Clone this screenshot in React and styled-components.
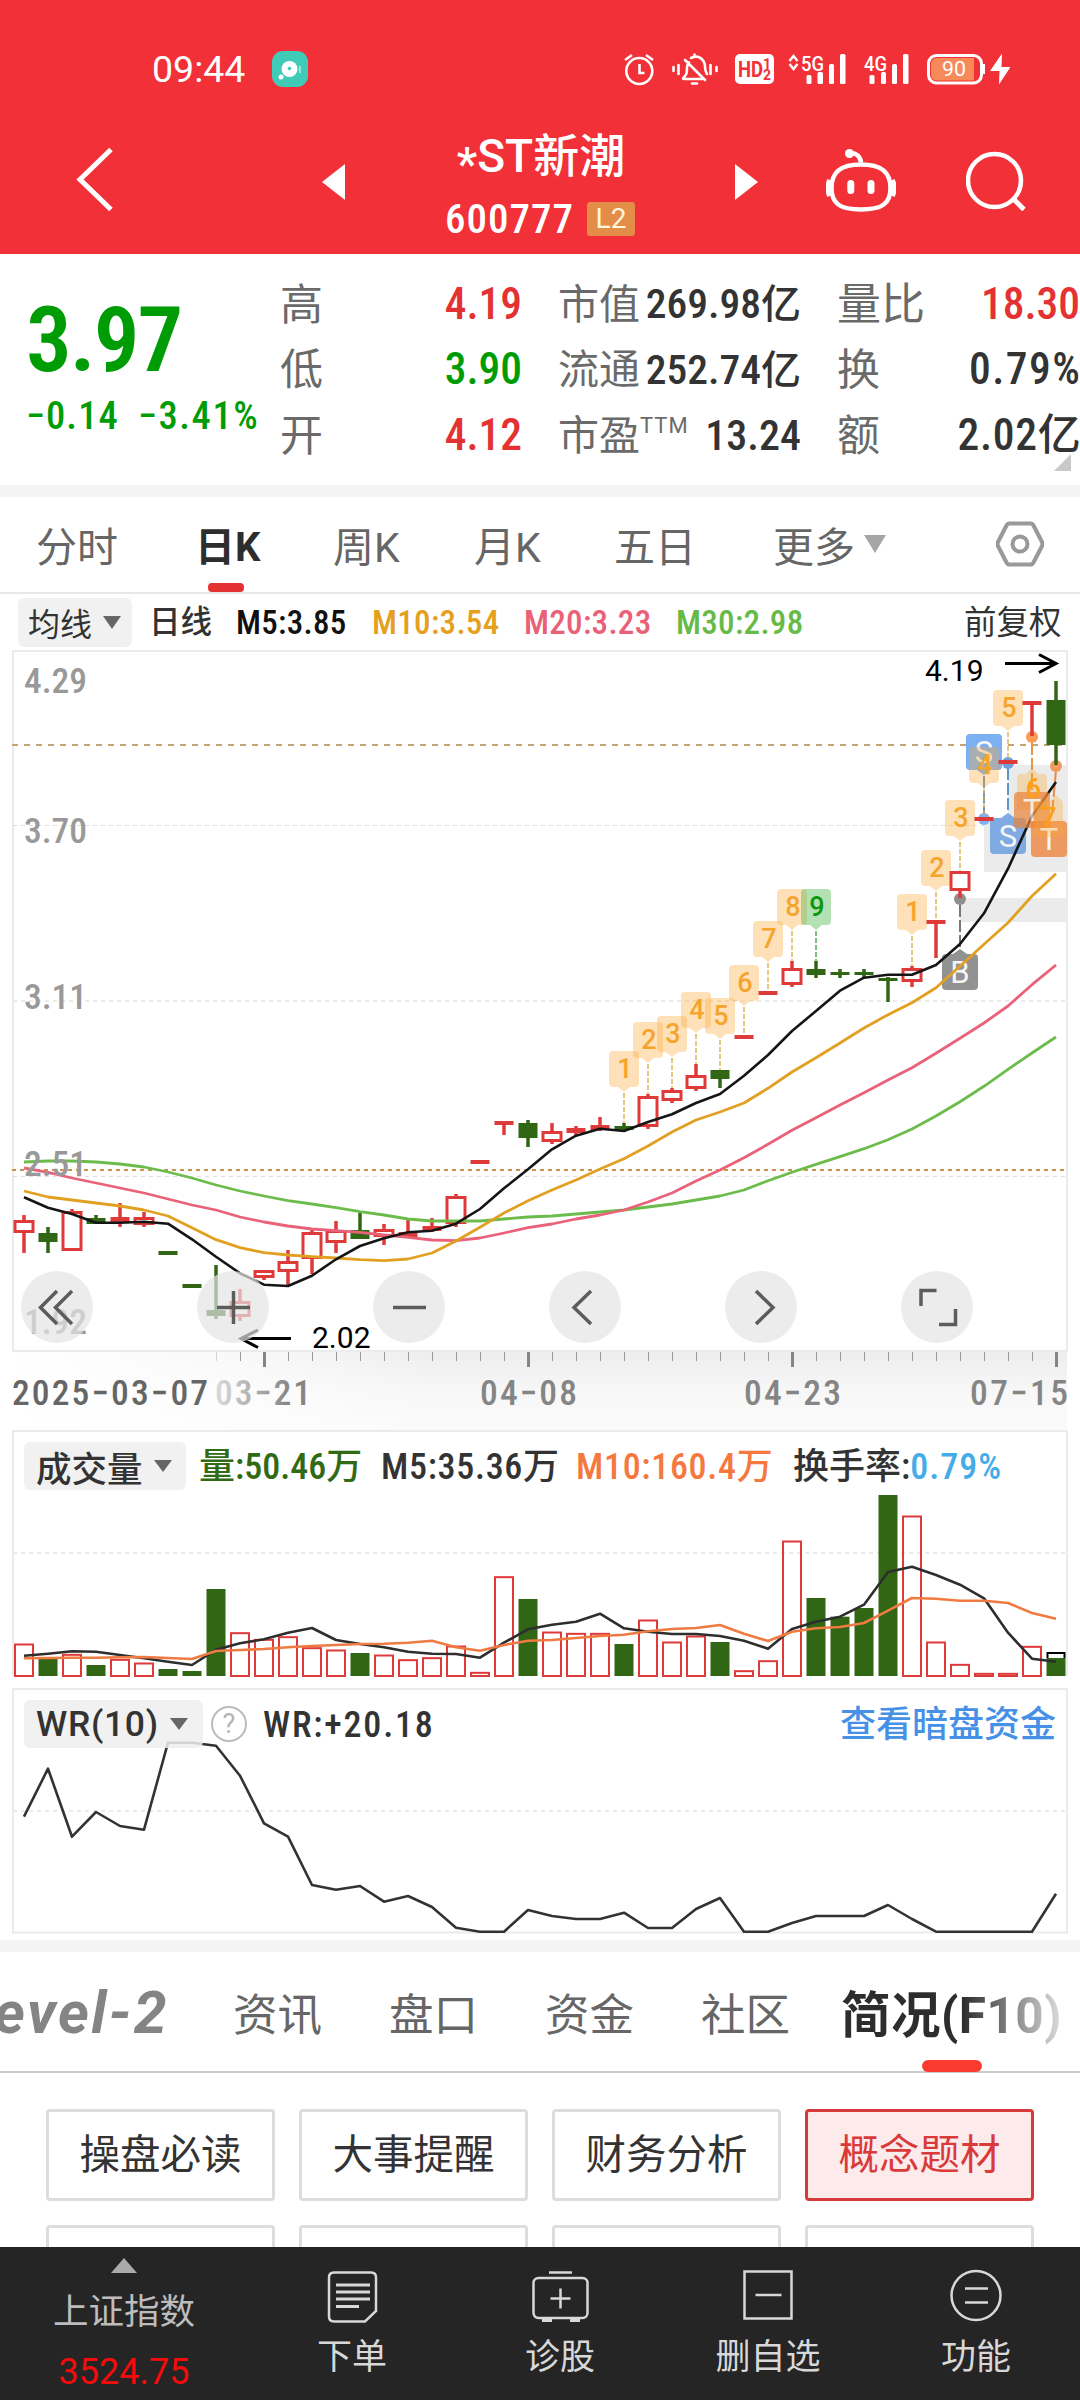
import React from "react";
import styled, { createGlobalStyle, css } from "styled-components";

const GlobalStyles = createGlobalStyle`
  *, *::before, *::after {
    box-sizing: border-box;
    margin: 0;
    padding: 0;
  }

  body {
    width: 1080px;
    background-color: #fff;
    font-family: Roboto, "Noto Sans CJK SC", sans-serif;
    color: #333;
    -webkit-font-smoothing: antialiased;
  }

  svg text {
    font-family: Roboto, "Noto Sans CJK SC", sans-serif;
  }
`;

const RED = "#e43232";
const CANDLE_RED = "#df3a3a";
const CANDLE_GREEN = "#306614";

/* ---------- data ---------- */

// kind, high, body top, body bottom, low (y on the canvas)
const candles = [
  ["r", 1215, 1220, 1233, 1253],
  ["g", 1227, 1233, 1242, 1253],
  ["r", 1209, 1211, 1251, 1251],
  ["g", 1215, 1218, 1224, 1224],
  ["r", 1203, 1217, 1222, 1227],
  ["r", 1212, 1217, 1225, 1227],
  ["g", 1251, 1251, 1255, 1255],
  ["g", 1284, 1284, 1288, 1288],
  ["g", 1265, 1310, 1316, 1319],
  ["r", 1289, 1301, 1317, 1321],
  ["r", 1270, 1270, 1278, 1280],
  ["r", 1250, 1261, 1272, 1286],
  ["r", 1230, 1232, 1259, 1274],
  ["r", 1221, 1230, 1243, 1253],
  ["g", 1213, 1230, 1239, 1239],
  ["r", 1224, 1229, 1237, 1245],
  ["r", 1219, 1232, 1237, 1237],
  ["r", 1218, 1226, 1231, 1231],
  ["r", 1194, 1196, 1224, 1227],
  ["r", 1160, 1160, 1164, 1164],
  ["r", 1121, 1121, 1125, 1135],
  ["g", 1120, 1123, 1138, 1147],
  ["r", 1123, 1131, 1142, 1144],
  ["r", 1126, 1128, 1133, 1135],
  ["r", 1117, 1125, 1130, 1131],
  ["g", 1123, 1126, 1130, 1131],
  ["r", 1094, 1096, 1127, 1129],
  ["r", 1088, 1090, 1101, 1103],
  ["r", 1064, 1075, 1089, 1091],
  ["g", 1070, 1070, 1079, 1088],
  ["r", 1035, 1035, 1039, 1039],
  ["r", 991, 991, 995, 995],
  ["r", 961, 968, 985, 987],
  ["g", 961, 969, 975, 978],
  ["g", 969, 972, 975, 978],
  ["g", 969, 972, 975, 978],
  ["g", 977, 978, 981, 1002],
  ["r", 966, 968, 982, 987],
  ["r", 920, 920, 924, 958],
  ["r", 871, 871, 891, 898],
  ["r", 817, 817, 821, 821],
  ["r", 760, 760, 764, 764],
  ["r", 701, 701, 705, 736],
  ["g", 681, 700, 745, 765],
];

// thirds of a pixel below 1020
const ma5 = [
  532, 563, 582, 608, 608, 605, 611, 658, 710, 760, 794, 798, 767, 718, 678,
  655, 637, 632, 611, 567, 505, 448, 388, 347, 326, 333, 306, 283, 249, 222,
  167, 105, 33, -27, -88, -127, -136, -136, -165, -228, -320, -454, -612, -714,
];
const ma10 = [
  513, 531, 540, 549, 558, 570, 588, 623, 659, 683, 698, 705, 710, 714, 719,
  722, 717, 699, 663, 622, 579, 542, 510, 480, 447, 416, 378, 336, 300, 276,
  249, 205, 156, 113, 69, 24, -16, -52, -97, -161, -227, -292, -372, -439,
];
const ma20 = [
  444, 457, 474, 489, 504, 519, 537, 555, 570, 591, 606, 618, 627, 632, 637,
  645, 652, 660, 662, 654, 639, 623, 612, 597, 585, 570, 546, 519, 483, 450,
  413, 373, 331, 293, 255, 218, 180, 143, 100, 55, 9, -42, -106, -165,
];
const ma30 = [
  426, 423, 423, 426, 432, 441, 456, 474, 495, 513, 528, 542, 552, 563, 575,
  585, 597, 603, 603, 603, 597, 591, 588, 582, 576, 570, 561, 552, 540, 528,
  510, 482, 457, 433, 410, 386, 359, 327, 288, 245, 199, 148, 99, 51,
];

// thirds of a pixel below 1420
const volumes = [
  ["r", 672], ["g", 712], ["r", 703], ["g", 735], ["r", 718], ["r", 729],
  ["g", 747], ["g", 753], ["g", 507], ["r", 638], ["r", 658], ["r", 650],
  ["r", 683], ["r", 690], ["g", 699], ["r", 705], ["r", 719], ["r", 713],
  ["r", 678], ["r", 757], ["r", 470], ["g", 537], ["r", 636], ["r", 640],
  ["r", 640], ["g", 672], ["r", 600], ["r", 666], ["r", 648], ["g", 666],
  ["r", 752], ["r", 722], ["r", 363], ["g", 534], ["g", 590], ["g", 564],
  ["g", 225], ["r", 288], ["r", 666], ["r", 733], ["r", 760], ["r", 760],
  ["r", 679], ["g", 714],
];
const volMa5 = [
  707, 701, 694, 695, 705, 715, 725, 735, 689, 670, 658, 638, 624, 660, 672,
  682, 695, 701, 702, 713, 668, 628, 614, 605, 581, 625, 635, 642, 642, 648,
  662, 686, 627, 605, 590, 554, 456, 440, 465, 494, 535, 638, 716, 725,
];
const volMa10 = [
  715, 714, 713, 713, 712, 711, 714, 717, 693, 690, 687, 682, 678, 675, 672,
  671, 668, 662, 682, 692, 675, 662, 660, 654, 648, 644, 634, 627, 624, 615,
  641, 663, 635, 625, 621, 609, 572, 534, 536, 542, 542, 549, 579, 596,
];
const wr = [
  1190, 1046, 1250, 1176, 1218, 1229, 968, 968, 977, 1067, 1210, 1250, 1395,
  1409, 1398, 1445, 1428, 1461, 1523, 1535, 1535, 1470, 1488, 1497, 1497, 1478,
  1524, 1524, 1467, 1434, 1535, 1535, 1509, 1488, 1488, 1488, 1455, 1497, 1535,
  1535, 1535, 1535, 1535, 1421,
];

// candle index, label, top of the tag, end of its leader line
const tags = [
  [25, "1", 1051, 1123],
  [26, "2", 1022, 1094],
  [27, "3", 1016, 1088],
  [28, "4", 992, 1064],
  [29, "5", 998, 1070],
  [30, "6", 965, 1035],
  [31, "7", 921, 991],
  [32, "8", 889, 961],
  [33, "9", 889, 961],
  [37, "1", 894, 966],
  [38, "2", 850, 920],
  [39, "3", 800, 871],
  [40, "4", 747, 817],
  [41, "5", 690, 760],
];

const xOf = (i) => 24 + i * 24;
const toPoints = (values, base) =>
  values.map((v, i) => `${xOf(i)},${(base + v / 3).toFixed(1)}`).join(" ");

/* ---------- shared ---------- */

const Page = styled.main`
  width: 1080px;
  height: 2400px;
  display: flex;
  flex-direction: column;
  overflow: hidden;
  background-color: #fff;
`;

const Divider = styled.div`
  height: 12px;
  flex-shrink: 0;
  background-color: #f4f4f4;
`;

const Num = styled.span`
  font-stretch: ${(p) => (p.$wide ? "normal" : "condensed")};
  letter-spacing: ${(p) => p.$ls ?? 0}px;
  white-space: nowrap;
`;

const Caret = styled.i`
  display: block;
  border-style: solid;
  border-color: transparent;
  border-width: ${(p) => p.$h}px ${(p) => p.$w / 2}px 0;
  border-top-color: ${(p) => p.$color};
`;

/* ---------- header ---------- */

const Header = styled.header`
  height: 254px;
  flex-shrink: 0;
  background-color: #f23037;
  color: #fff;
`;

const StatusBar = styled.div`
  height: 138px;
  padding: 0 70px 0 152px;
  display: flex;
  align-items: center;
  justify-content: space-between;
`;

const Clock = styled.div`
  display: flex;
  align-items: center;
  gap: 27px;
  font-size: 37.5px;
  line-height: 40px;
`;

const StatusIcons = styled.div`
  display: flex;
  align-items: center;
`;

const NavBar = styled.div`
  height: 116px;
  display: grid;
  grid-template-columns: 322px 23px 390px 23px 68px 70px 70px 59px;
`;

const NavIcon = styled.div`
  padding-top: ${(p) => p.$top}px;
  padding-left: ${(p) => p.$left ?? 0}px;

  svg {
    display: block;
  }
`;

const Title = styled.div`
  display: flex;
  flex-direction: column;
  align-items: center;
`;

const StockName = styled.h1`
  font-size: 46px;
  line-height: 50px;
  font-weight: 500;
  margin-top: -7px;
  padding-left: 2px;
`;

const Star = styled.span`
  position: relative;
  top: 8px;
`;

const StockCode = styled.div`
  display: flex;
  align-items: center;
  gap: 13px;
  font-size: 41px;
  line-height: 44px;
  font-weight: 500;
  margin-top: 16px;
`;

const LevelBadge = styled.span`
  width: 48px;
  height: 34px;
  border-radius: 3px;
  background-color: #e38d48;
  color: #fff6dc;
  font-size: 28px;
  line-height: 34px;
  font-weight: 400;
  text-align: center;
`;

function StatusIconRow() {
  return (
    <StatusIcons>
      <svg width="386" height="34" viewBox="624 52 386 34" fill="none">
        <g stroke="#fff" strokeWidth="2.6">
          <circle cx="639.3" cy="71" r="13" />
          <path d="M639.500 64v9h5" />
          <path d="M625 60l7-5M646 55l7 5" />
        </g>
        <g stroke="#fff" strokeWidth="2.6" strokeLinecap="round">
          <path d="M683 78.500c4-4 4-6 4-11 0-3 1-4 2-5M691 58c8-4 14 2 14 9 0 4 1 5 2 7M684 79h18M685 60l20 20" />
          <path d="M692 83.500h5M694.500 54.500v2M673.500 67v4M678.500 65v9M710.500 65v9M716.500 67v4" />
        </g>
        <rect x="735" y="54" width="39" height="30" rx="5" fill="#fff" />
        <text x="738" y="77" fontSize="22" fontWeight="700" fill="#f23037" textLength="25" lengthAdjust="spacingAndGlyphs">HD</text>
        <text x="763" y="69" fontSize="14" fontWeight="700" fill="#f23037">1</text>
        <text x="763" y="80" fontSize="14" fontWeight="700" fill="#f23037">2</text>
        <path d="M789.500 61l4-5 4 5M789.500 64l4 5 4-5" stroke="#fff" strokeWidth="2.400" />
        <text x="801" y="70.500" fontSize="21" fontWeight="500" fill="#fff" textLength="23" lengthAdjust="spacingAndGlyphs">5G</text>
        <g fill="#fff">
          <rect x="806.500" y="75" width="5" height="9" rx="1.500" />
          <rect x="817.500" y="72" width="5.500" height="12" rx="1.500" />
          <rect x="829" y="64" width="5" height="20" rx="1.500" />
          <rect x="840" y="54" width="5.500" height="30" rx="1.500" />
          <rect x="869.500" y="75" width="5" height="9" rx="1.500" />
          <rect x="881" y="72" width="5" height="12" rx="1.500" />
          <rect x="892" y="64" width="5" height="20" rx="1.500" />
          <rect x="903" y="54" width="5.500" height="30" rx="1.500" />
        </g>
        <text x="864" y="70.500" fontSize="21" fontWeight="500" fill="#fff" textLength="23" lengthAdjust="spacingAndGlyphs">4G</text>
        <rect x="928.500" y="55.500" width="53" height="27.500" rx="8" stroke="#fff" strokeWidth="3" />
        <path d="M936 58h38v22.500h-38q-5-1-5-6v-11q0-4 5-5.500z" fill="#f78a58" />
        <rect x="982.500" y="64" width="2.500" height="10" fill="#fff" />
        <text x="942" y="76" fontSize="20.500" fill="#fff" textLength="24" lengthAdjust="spacingAndGlyphs">90</text>
        <path d="M1002 53.500L990 71h9.500l-.5 13.500L1010.500 67h-9z" fill="#fff" />
      </svg>
    </StatusIcons>
  );
}

function AppHeader() {
  return (
    <Header>
      <StatusBar>
        <Clock>
          <Num $wide>09:44</Num>
          <svg width="36" height="36" viewBox="0 0 36 36">
            <rect width="36" height="36" rx="11" fill="#3fcbb8" />
            <circle cx="17.500" cy="18" r="8" fill="#fff" />
            <circle cx="17.500" cy="17.500" r="1.800" fill="#3fcbb8" />
            <circle cx="9" cy="26" r="2.500" fill="#fff" />
            <rect x="27" y="15" width="1.800" height="7" fill="#a5e8df" />
          </svg>
        </Clock>
        <StatusIconRow />
      </StatusBar>
      <NavBar>
        <NavIcon $top={8} $left={74}>
          <svg width="42" height="68" viewBox="0 0 42 68" fill="none">
            <path d="M37 3.500L6 33.500 37 63.500" stroke="#fff" strokeWidth="5" />
          </svg>
        </NavIcon>
        <NavIcon $top={26}>
          <svg width="23" height="36" viewBox="0 0 23 36">
            <path d="M23 0v36L0 18z" fill="#fff" />
          </svg>
        </NavIcon>
        <Title>
          <StockName>
            <Star>*</Star>ST新潮
          </StockName>
          <StockCode>
            <Num $ls={1}>600777</Num>
            <LevelBadge>L2</LevelBadge>
          </StockCode>
        </Title>
        <NavIcon $top={26}>
          <svg width="23" height="36" viewBox="0 0 23 36">
            <path d="M0 0v36l23-18z" fill="#fff" />
          </svg>
        </NavIcon>
        <div />
        <NavIcon $top={10}>
          <svg width="70" height="66" viewBox="826 148 70 66" fill="none" stroke="#fff">
            <path d="M831.500 188c0-17 10-23.500 29.500-23.500s29.500 6.500 29.500 23.500c0 16-9 21.500-29.500 21.500s-29.500-5.500-29.500-21.500z" strokeWidth="4.500" />
            <path d="M849 153.500c7-1 11.500 2.500 12 9" strokeWidth="4.500" />
            <circle cx="849.500" cy="153.500" r="4.500" fill="#fff" stroke="none" />
            <path d="M829.500 180q-4 8 0 16M892.500 180q4 8 0 16" strokeWidth="4.500" />
            <path d="M850.800 183.500v7M871 183.500v7" strokeWidth="7" strokeLinecap="round" />
          </svg>
        </NavIcon>
        <div />
        <NavIcon $top={13}>
          <svg width="60" height="60" viewBox="966 151 60 60" fill="none" stroke="#fff">
            <circle cx="994.500" cy="180.500" r="26.500" strokeWidth="4.500" />
            <path d="M1013 198.500l11 11" strokeWidth="5" />
          </svg>
        </NavIcon>
      </NavBar>
    </Header>
  );
}

/* ---------- quote ---------- */

const Quote = styled.section`
  position: relative;
  height: 231px;
  flex-shrink: 0;
  display: grid;
  grid-template-columns: 280px 242px 36px 243px 36px 243px;
`;

const PriceBlock = styled.div`
  padding: 41px 0 0 26px;
  color: #009c05;
`;

const Price = styled.div`
  font-size: 91px;
  line-height: 90px;
  font-weight: 600;
`;

const Change = styled.div`
  display: flex;
  gap: 19px;
  margin-top: 9px;
  font-size: 38.5px;
  line-height: 44px;
  font-weight: 500;
`;

const Metrics = styled.dl`
  padding-top: 18px;
`;

const Metric = styled.div`
  height: 65.5px;
  display: flex;
  align-items: center;
  justify-content: space-between;
`;

const MetricLabel = styled.dt`
  color: #6a6a6a;
  font-size: ${(p) => p.$size ?? 43}px;
  line-height: 60px;
  white-space: nowrap;

  sup {
    display: inline-block;
    font-size: 22px;
    line-height: 20px;
    vertical-align: 17px;
    letter-spacing: 1px;
  }
`;

const tones = { up: RED, down: "#009c05", flat: "#333" };

const MetricValue = styled.dd`
  color: ${(p) => tones[p.$tone]};
  font-size: ${(p) => p.$size ?? 43.5}px;
  line-height: 60px;
  font-weight: 500;
  white-space: nowrap;
  font-stretch: condensed;
  letter-spacing: ${(p) => p.$ls ?? 0}px;
  margin-right: ${(p) => -(p.$ls ?? 0)}px;

  em {
    font-style: normal;
    font-size: ${(p) => p.$unit ?? 40}px;
    letter-spacing: 0;
  }
`;

const Corner = styled.i`
  position: absolute;
  right: 9px;
  bottom: 14px;
  border-style: solid;
  border-width: 0 0 17px 17px;
  border-color: transparent transparent #c8c8c8;
`;

function QuotePanel() {
  return (
    <Quote>
      <PriceBlock>
        <Price>
          <Num $ls={-2}>3.97</Num>
        </Price>
        <Change>
          <Num $ls={1.1}>−0.14</Num>
          <Num $ls={1.6}>−3.41%</Num>
        </Change>
      </PriceBlock>
      <Metrics>
        <Metric>
          <MetricLabel>高</MetricLabel>
          <MetricValue $tone="up">4.19</MetricValue>
        </Metric>
        <Metric>
          <MetricLabel>低</MetricLabel>
          <MetricValue $tone="down">3.90</MetricValue>
        </Metric>
        <Metric>
          <MetricLabel>开</MetricLabel>
          <MetricValue $tone="up">4.12</MetricValue>
        </Metric>
      </Metrics>
      <div />
      <Metrics>
        <Metric>
          <MetricLabel $size={41}>市值</MetricLabel>
          <MetricValue $tone="flat" $size={41.5}>
            269.98<em>亿</em>
          </MetricValue>
        </Metric>
        <Metric>
          <MetricLabel $size={41}>流通</MetricLabel>
          <MetricValue $tone="flat" $size={41.5}>
            252.74<em>亿</em>
          </MetricValue>
        </Metric>
        <Metric>
          <MetricLabel $size={41}>
            市盈<sup>TTM</sup>
          </MetricLabel>
          <MetricValue $tone="flat" $size={42}>13.24</MetricValue>
        </Metric>
      </Metrics>
      <div />
      <Metrics>
        <Metric>
          <MetricLabel $size={44}>量比</MetricLabel>
          <MetricValue $tone="up">18.30</MetricValue>
        </Metric>
        <Metric>
          <MetricLabel>换</MetricLabel>
          <MetricValue $tone="flat" $ls={1.5}>0.79%</MetricValue>
        </Metric>
        <Metric>
          <MetricLabel>额</MetricLabel>
          <MetricValue $tone="flat" $unit={43} $ls={0.7}>
            2.02<em>亿</em>
          </MetricValue>
        </Metric>
      </Metrics>
      <Corner />
    </Quote>
  );
}

/* ---------- period tabs ---------- */

const PeriodTabs = styled.nav`
  height: 97px;
  flex-shrink: 0;
  display: grid;
  grid-template-columns: 36px 159px 138px 141px 140px 159px 223px 84px;
  border-bottom: 2px solid #e8e8e8;
`;

const PeriodTab = styled.a`
  position: relative;
  display: flex;
  align-items: center;
  gap: 9px;
  padding-bottom: 2px;
  font-size: 41px;
  color: #666;

  ${(p) =>
    p.$active &&
    css`
      color: #2d2d2d;
      font-weight: 700;
      font-size: 40px;

      &::after {
        content: "";
        position: absolute;
        left: 13px;
        bottom: 0;
        width: 36px;
        height: 9px;
        border-radius: 4px;
        background-color: ${RED};
      }
    `}
`;

const IndicatorBar = styled.div`
  height: 56px;
  flex-shrink: 0;
  display: grid;
  grid-template-columns: 131px 87px 136px 152px 152px 288px 116px;
  padding-left: 18px;
  align-items: center;
  font-size: 33px;
  line-height: 40px;
`;

const PickerButton = styled.button`
  width: ${(p) => p.$w}px;
  height: ${(p) => p.$h ?? 48}px;
  padding-left: ${(p) => p.$pad ?? 12}px;
  flex-shrink: 0;
  display: flex;
  align-items: center;
  gap: 11px;
  border: none;
  border-radius: 6px;
  background-color: rgba(238, 238, 238, 0.85);
  font-family: inherit;
  font-size: ${(p) => p.$size ?? 35.5}px;
  font-weight: ${(p) => p.$weight ?? 500};
  color: #333;
`;

const Legend = styled.span`
  padding-top: 2px;
  color: ${(p) => p.$color};
  font-weight: 500;
  font-stretch: condensed;
  white-space: nowrap;
  letter-spacing: ${(p) => p.$ls ?? 0}px;
`;

const LegendTitle = styled(Legend)`
  font-size: 31.5px;
`;

const Adjust = styled.span`
  padding-top: 2px;
  font-size: 32.5px;
`;

function Periods() {
  return (
    <>
      <PeriodTabs>
        <div />
        <PeriodTab>分时</PeriodTab>
        <PeriodTab $active>日K</PeriodTab>
        <PeriodTab>周K</PeriodTab>
        <PeriodTab>月K</PeriodTab>
        <PeriodTab>五日</PeriodTab>
        <PeriodTab>
          更多
          <Caret $w={22} $h={18} $color="#a6a6a6" />
        </PeriodTab>
        <PeriodTab>
          <svg width="48" height="46" viewBox="0 0 48 46" fill="none" stroke="#999" strokeWidth="4">
            <path d="M13.500 2.500h21q2 0 3 2L46 21q1 2 0 4L37.500 41.500q-1 2-3 2h-21q-2 0-3-2L2 25q-1-2 0-4L10.500 4.500q1-2 3-2z" />
            <circle cx="24" cy="23" r="7.500" />
          </svg>
        </PeriodTab>
      </PeriodTabs>
      <IndicatorBar>
        <PickerButton $w={114} $h={49} $pad={10} $size={32} $weight={400}>
          均线
          <Caret $w={18} $h={13} $color="#666" />
        </PickerButton>
        <LegendTitle $color="#333">日线</LegendTitle>
        <Legend $color="#111" $ls={0.3}>M5:3.85</Legend>
        <Legend $color="#e5a020" $ls={0.3}>M10:3.54</Legend>
        <Legend $color="#ea6077" $ls={0.3}>M20:3.23</Legend>
        <Legend $color="#66bb48" $ls={0.3}>M30:2.98</Legend>
        <Adjust>前复权</Adjust>
      </IndicatorBar>
    </>
  );
}

/* ---------- candlestick chart ---------- */

const ChartWrap = styled.section`
  position: relative;
  height: 780px;
  flex-shrink: 0;

  > svg {
    display: block;
  }
`;

const AxisText = styled.g`
  font-size: 35.5px;
  font-weight: 500;
  font-stretch: condensed;
`;

const ChartControls = styled.div`
  position: absolute;
  left: 21px;
  top: 621px;
  display: flex;
  gap: 104px;
`;

const RoundButton = styled.button`
  width: 72px;
  height: 72px;
  border: none;
  border-radius: 50%;
  background-color: rgba(228, 228, 228, 0.7);

  svg {
    display: block;
  }
`;

function Candle({ index, kind, high, top, bottom, low }) {
  const x = xOf(index);
  const color = kind === "r" ? CANDLE_RED : CANDLE_GREEN;
  const hollow = kind === "r" && bottom - top > 6;

  return (
    <g>
      {high < top && <path d={`M${x} ${high}V${top}`} stroke={color} strokeWidth="3.500" />}
      {low > bottom && <path d={`M${x} ${bottom}V${low}`} stroke={color} strokeWidth="3.500" />}
      {hollow ? (
        <rect x={x - 9} y={top + 1.5} width="18" height={bottom - top - 3} fill="#fff" stroke={color} strokeWidth="3" />
      ) : (
        <rect x={x - 9.5} y={top} width="19" height={bottom - top} fill={color} />
      )}
    </g>
  );
}

function CountTag({ index, label, top, end }) {
  const x = xOf(index);
  const green = label === "9";
  const color = green ? "#0d970d" : "#f5a42c";

  return (
    <g>
      <path d={`M${x} ${top + 42}V${end}`} stroke={green ? "#3a9a3a" : "#d9ac3c"} strokeWidth="1.300" strokeDasharray="5 2" />
      <path
        d={`M${x - 11} ${top}h22q4 0 4 4v28q0 4-4 4h-5l-6 5-6-5h-5q-4 0-4-4v-28q0-4 4-4z`}
        fill={green ? "#4fb94f" : "#fba832"}
        fillOpacity={green ? 0.43 : 0.34}
      />
      <text x={x + 1} y={top + 27} fontSize="27" fontWeight="500" fill={color} textAnchor="middle">
        {label}
      </text>
    </g>
  );
}

function TradeTag({ x, top, label, color, opacity = 1, pointer }) {
  return (
    <g opacity={opacity}>
      <rect x={x - 18} y={top} width="36" height="36" rx="4" fill={color} />
      {pointer === "up" && <path d={`M${x - 7} ${top}l7-5 7 5z`} fill={color} />}
      {pointer === "down" && <path d={`M${x - 7} ${top + 36}l7 5 7-5z`} fill={color} />}
      <text x={x} y={top + 29} fontSize="31" fill="#f6f6f6" textAnchor="middle">
        {label}
      </text>
    </g>
  );
}

function KlineChart() {
  const ticks = Array.from({ length: 36 }, (_, i) => 216 + i * 24);

  return (
    <ChartWrap>
      <svg width="1080" height="780" viewBox="0 650 1080 780" fill="none">
        <defs>
          <linearGradient id="axisShade" x1="0" y1="0" x2="0" y2="1">
            <stop offset="0" stopColor="#ededed" />
            <stop offset="0.500" stopColor="#f7f7f7" />
            <stop offset="1" stopColor="#fbfbfb" />
          </linearGradient>
          <linearGradient id="axisFade" x1="0" y1="0" x2="1" y2="0">
            <stop offset="0" stopColor="#fff" />
            <stop offset="0.550" stopColor="#fff" stopOpacity="0.600" />
            <stop offset="1" stopColor="#fff" stopOpacity="0" />
          </linearGradient>
          <linearGradient id="dateFade" gradientUnits="userSpaceOnUse" x1="214" y1="0" x2="290" y2="0">
            <stop offset="0" stopColor="#dcdcdc" />
            <stop offset="1" stopColor="#858585" />
          </linearGradient>
        </defs>

        <rect x="13" y="1351" width="1054" height="79" fill="url(#axisShade)" />
        <rect x="13" y="1351" width="420" height="79" fill="url(#axisFade)" />
        <rect x="13" y="651" width="1054" height="700" stroke="#ebebeb" strokeWidth="2" />

        <g strokeDasharray="4 4">
          <path d="M13 825.500H1067" stroke="#dedede" strokeWidth="1" />
          <path d="M13 1001H1067" stroke="#ebebeb" strokeWidth="2" />
          <path d="M13 1176.500H1067" stroke="#dedede" strokeWidth="1" />
          <path d="M12 1170H1067" stroke="#c9914c" strokeWidth="2" />
        </g>
        <path d="M12 745H1067" stroke="#c4a473" strokeWidth="2" strokeDasharray="6 6" />

        <g fill="#ebebeb">
          <path d="M1008 765H1067V872H984V819H1008z" />
          <rect x="960" y="898" width="107" height="24" />
        </g>

        {/* buy, sell and T markers */}
        <g strokeWidth="2" strokeDasharray="12 3">
          <path d="M984 776V815" stroke="#5d95c8" />
          <path d="M1008 768V813" stroke="#5d95c8" />
          <path d="M960 905V950" stroke="#777" />
          <path d="M1032 743V790" stroke="#e29547" />
          <path d="M1056 770L1052 815" stroke="#ea8a45" />
        </g>
        <circle cx="984" cy="819" r="6" fill="#83b0f0" />
        <circle cx="1008" cy="763" r="6" fill="#6f9fd8" />
        <circle cx="960" cy="899" r="6" fill="#8f8f8f" />
        <circle cx="1032" cy="737" r="6" fill="#fa9c55" />
        <circle cx="1056" cy="766" r="6" fill="#f09a60" />
        <TradeTag x={984} top={734} label="S" color="#7bb0f3" pointer="down" />
        <TradeTag x={1008} top={818} label="S" color="#80abe2" pointer="up" />
        <TradeTag x={1049} top={821} label="T" color="#ec9a62" />
        <TradeTag x={960} top={954} label="B" color="#929292" pointer="up" />

        {tags.map(([index, label, top, end]) => (
          <CountTag key={index} index={index} label={label} top={top} end={end} />
        ))}
        {candles.map(([kind, high, top, bottom, low], i) => (
          <Candle key={i} index={i} kind={kind} high={high} top={top} bottom={bottom} low={low} />
        ))}

        <g strokeWidth="2.800" strokeLinejoin="round">
          <polyline points={toPoints(ma30, 1020)} stroke="#6cbc4c" />
          <polyline points={toPoints(ma20, 1020)} stroke="#e9627a" />
          <polyline points={toPoints(ma10, 1020)} stroke="#e2a022" />
          <polyline points={toPoints(ma5, 1020)} stroke="#151515" strokeWidth="2.600" />
        </g>

        <path d="M1021 774h5l6-6 6 6h5q4 0 4 4v28q0 4-4 4h-22q-4 0-4-4v-28q0-4 4-4z" fill="#fba832" fillOpacity="0.320" />
        <TradeTag x={1032} top={792} label="T" color="#ea8338" opacity={0.7} />
        <path d="M1038 801h12l6-6 6 6q1 1 1 4v28q0 4-4 4h-21q-4 0-4-4v-28q0-4 4-4z" fill="#fba832" fillOpacity="0.320" />
        <g fontSize="27" fontWeight="500" fill="#ff9f14" textAnchor="middle">
          <text x="1033.500" y="798">6</text>
          <text x="1049" y="827">7</text>
        </g>

        {/* price scale and range extremes */}
        <AxisText fill="#999">
          {[["4.29", 693], ["3.70", 843], ["3.11", 1009], ["2.51", 1176], ["1.92", 1334]].map(([label, y]) => (
            <text key={label} x="24" y={y} textLength="63">
              {label}
            </text>
          ))}
        </AxisText>
        <g stroke="#000" strokeWidth="3">
          <path d="M1005 663.500H1055M1039 654.500L1056 663.500 1039 672.500" />
          <path d="M291 1338.500H242M258 1330L241 1338.500 258 1347.500" />
        </g>
        <g fontSize="30" fill="#000">
          <text x="925" y="681">4.19</text>
          <text x="312" y="1347.500">2.02</text>
        </g>

        {ticks.map((x) => {
          const major = (x - 264) % 264 === 0;
          return (
            <path
              key={x}
              d={`M${x + 0.5} 1352v${major ? 15 : 9}`}
              stroke={x === 216 ? "#d5d5d5" : major ? "#858585" : "#9a9a9a"}
              strokeWidth={major ? 3 : 1}
            />
          );
        })}
        <AxisText fill="#858585">
          <text x="12" y="1405" fill="#666" textLength="196">2025−03−07</text>
          <text x="215" y="1405" fill="url(#dateFade)" textLength="96">03−21</text>
          <text x="480" y="1405" textLength="97">04−08</text>
          <text x="744" y="1405" textLength="97">04−23</text>
          <text x="970" y="1405" textLength="98">07−15</text>
        </AxisText>
      </svg>

      <ChartControls>
        {[
          "M36 20L19.500 36.500 36 53M51 20L34.500 36.500 51 53",
          "M20 36.500H53M36.500 20V53",
          "M20 36.500H53",
          "M42 20L25 36.500 42 53",
          "M31 20L48 36.500 31 53",
          "M35.500 19.500H20V35M54.500 38V53.500H38",
        ].map((d) => (
          <RoundButton key={d}>
            <svg width="72" height="72" viewBox="0 0 72 72" fill="none">
              <path d={d} stroke="#5c5c5c" strokeWidth="3.500" />
            </svg>
          </RoundButton>
        ))}
      </ChartControls>
    </ChartWrap>
  );
}

/* ---------- sub charts ---------- */

const SubChart = styled.section`
  position: relative;
  height: ${(p) => p.$h}px;
  flex-shrink: 0;

  > svg {
    position: absolute;
    inset: 0;
  }
`;

const SubHeader = styled.div`
  position: relative;
  display: grid;
  grid-template-columns: ${(p) => p.$cols};
  align-items: center;
  padding: 12px 0 0 24px;
  font-size: 36px;
  line-height: 46px;
`;

const HelpIcon = styled.span`
  width: 36px;
  height: 36px;
  border: 2.5px solid #bcbcbc;
  border-radius: 50%;
  color: #b4b4b4;
  font-size: 27px;
  line-height: 32px;
  text-align: center;
`;

const DarkPoolLink = styled.a`
  padding-top: 2px;
  color: #4690e6;
  font-size: 36px;
  font-weight: 500;
`;

function VolumeChart() {
  return (
    <SubChart $h={258}>
      <svg width="1080" height="258" viewBox="0 1430 1080 258" fill="none">
        <path d="M13 1676V1431H1067V1676" stroke="#ebebeb" strokeWidth="2" />
        <path d="M13 1553H1067" stroke="#ebebeb" strokeWidth="2" strokeDasharray="4 4" />
        {volumes.map(([kind, v], i) => {
          const top = 1420 + v / 3;
          const x = xOf(i);
          return kind === "g" ? (
            <rect key={i} x={x - 9.5} y={top} width="19" height={1676 - top} fill={CANDLE_GREEN} />
          ) : (
            <rect key={i} x={x - 9} y={top + 0.5} width="18" height={Math.max(1675.5 - top, 1)} stroke={CANDLE_RED} strokeWidth="2" />
          );
        })}
        <path d="M1047.500 1658V1653H1064.500V1658" stroke="#000" strokeWidth="2" />
        <g strokeWidth="2.600" strokeLinejoin="round">
          <polyline points={toPoints(volMa5, 1420)} stroke="#2e2e2e" />
          <polyline points={toPoints(volMa10, 1420)} stroke="#ef7a42" />
        </g>
      </svg>
      <SubHeader $cols="175px 182px 195px 217px auto 1fr">
        <PickerButton $w={162}>
          成交量
          <Caret $w={18} $h={12} $color="#666" />
        </PickerButton>
        <Legend $color="#326a14">量:50.46万</Legend>
        <Legend $color="#333" $ls={0.7}>M5:35.36万</Legend>
        <Legend $color="#f5793f" $ls={0.7}>M10:160.4万</Legend>
        <Legend $color="#333">换手率:</Legend>
        <Legend $color="#45ace8" $ls={1}>0.79%</Legend>
      </SubHeader>
    </SubChart>
  );
}

function WrChart() {
  return (
    <SubChart $h={252}>
      <svg width="1080" height="252" viewBox="0 1688 1080 252" fill="none">
        <rect x="13" y="1689" width="1054" height="243.500" stroke="#ebebeb" strokeWidth="2" />
        <path d="M13 1811H1067" stroke="#ebebeb" strokeWidth="2" strokeDasharray="4 4" />
        <polyline points={toPoints(wr, 1420)} stroke="#333" strokeWidth="2.600" strokeLinejoin="round" />
      </svg>
      <SubHeader $cols="187px 52px 577px auto">
        <PickerButton $w={179}>
          <Num $wide $ls={0.7}>WR(10)</Num>
          <Caret $w={18} $h={12} $color="#666" />
        </PickerButton>
        <HelpIcon>?</HelpIcon>
        <Legend $color="#333" $ls={1.8}>WR:+20.18</Legend>
        <DarkPoolLink>查看暗盘资金</DarkPoolLink>
      </SubHeader>
    </SubChart>
  );
}

/* ---------- info tabs ---------- */

const InfoTabs = styled.nav`
  height: 121px;
  flex-shrink: 0;
  display: grid;
  grid-template-columns: 233px 156px 156px 156px 140px 239px;
  border-bottom: 2px solid #cacaca;
`;

const InfoTab = styled.a`
  position: relative;
  display: flex;
  align-items: center;
  height: 120px;
  padding-bottom: 2px;
  font-size: 44.5px;
  color: #666;
  white-space: nowrap;

  ${(p) =>
    p.$active &&
    css`
      font-size: 49.5px;
      font-weight: 700;

      span {
        letter-spacing: 0.5px;
        background: linear-gradient(90deg, #2d2d2d 55%, #ddd 100%);
        background-clip: text;
        color: transparent;
      }

      &::after {
        content: "";
        position: absolute;
        left: 81px;
        bottom: 0;
        width: 60px;
        height: 12px;
        border-radius: 6px;
        background-color: #fa3b30;
      }
    `}
`;

const LevelLogo = styled(InfoTab)`
  margin-left: -6px;
  padding-bottom: 0;
  color: #848484;
  font-size: 59px;
  font-style: italic;
  font-weight: 700;
  letter-spacing: 2.4px;
`;

const TopicGrid = styled.section`
  flex: 1;
  min-height: 0;
  overflow: hidden;
  display: grid;
  grid-template-columns: repeat(4, 229px);
  grid-auto-rows: 92px;
  gap: 24px;
  padding: 36px 46px 0;
`;

const Topic = styled.button`
  border: 3px solid #ddd;
  border-radius: 4px;
  background-color: #fff;
  color: #333;
  font-family: inherit;
  font-size: 40.5px;
  line-height: 56px;

  ${(p) =>
    p.$active &&
    css`
      border-color: #d63a3a;
      background-color: #fdeaea;
      color: #d93a3a;
    `}
`;

/* ---------- bottom bar ---------- */

const BottomBar = styled.footer`
  height: 153px;
  flex-shrink: 0;
  display: grid;
  grid-template-columns: 248px repeat(4, 208px);
  background-color: #252525;
  color: #d8d8d8;
`;

const IndexCell = styled.div`
  display: flex;
  flex-direction: column;
  align-items: center;
  padding-top: 11px;
  font-size: 35.5px;
  line-height: 44px;
  color: #bdbdbd;
`;

const UpCaret = styled(Caret)`
  transform: rotate(180deg);
  margin-bottom: 17px;
`;

const IndexValue = styled.div`
  margin-top: 18px;
  color: #f40b0b;
  font-size: 36px;
  line-height: 40px;
`;

const Action = styled.button`
  display: flex;
  flex-direction: column;
  align-items: center;
  padding-top: 20px;
  border: none;
  background: none;
  color: inherit;
  font-family: inherit;
  font-size: 35px;
  line-height: 44px;

  svg {
    display: block;
    margin-bottom: 12px;
  }
`;

const actions = [
  {
    label: "下单",
    icon: (
      <>
        <path d="M10 5.500h37q5 0 5 5V44L41 54.500H10q-5 0-5-5V10.500q0-5 5-5z" />
        <path d="M12 18h34M12 25h34M12 32h34M12 39.500h23" strokeWidth="3" />
      </>
    ),
  },
  {
    label: "诊股",
    icon: (
      <>
        <rect x="1.500" y="11" width="54" height="40" rx="5" />
        <path d="M17 5.500H40M28.500 21.500v20M18.500 31.500h20" />
        <path d="M10 53h10M38 53h10" strokeWidth="4" />
      </>
    ),
  },
  {
    label: "删自选",
    icon: <path d="M4.500 4.500h47v47h-47zM15.500 28h26" />,
  },
  {
    label: "功能",
    icon: (
      <>
        <circle cx="28" cy="28.500" r="24.500" />
        <path d="M17 21.500h23M17 35.500h23" />
      </>
    ),
  },
];

function App() {
  return (
    <>
      <GlobalStyles />
      <Page>
        <AppHeader />
        <QuotePanel />
        <Divider />
        <Periods />
        <KlineChart />
        <VolumeChart />
        <WrChart />
        <Divider />
        <InfoTabs>
          <LevelLogo>evel-2</LevelLogo>
          <InfoTab>资讯</InfoTab>
          <InfoTab>盘口</InfoTab>
          <InfoTab>资金</InfoTab>
          <InfoTab>社区</InfoTab>
          <InfoTab $active>
            <span>简况(F10)</span>
          </InfoTab>
        </InfoTabs>
        <TopicGrid>
          <Topic>操盘必读</Topic>
          <Topic>大事提醒</Topic>
          <Topic>财务分析</Topic>
          <Topic $active>概念题材</Topic>
          <Topic />
          <Topic />
          <Topic />
          <Topic />
        </TopicGrid>
        <BottomBar>
          <IndexCell>
            <UpCaret $w={26} $h={15} $color="#aaa" />
            上证指数
            <IndexValue>
              <Num $wide>3524.75</Num>
            </IndexValue>
          </IndexCell>
          {actions.map((action) => (
            <Action key={action.label}>
              <svg width="57" height="57" viewBox="0 0 57 57" fill="none" stroke="#d8d8d8" strokeWidth="2.500">
                {action.icon}
              </svg>
              {action.label}
            </Action>
          ))}
        </BottomBar>
      </Page>
    </>
  );
}

export default App;
